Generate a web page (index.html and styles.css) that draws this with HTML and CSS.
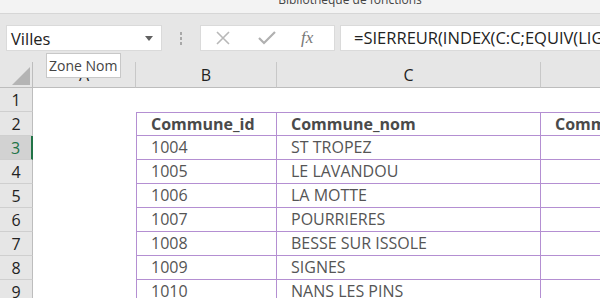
FILE: index.html
```html
<!DOCTYPE html>
<html lang="fr">
<head>
    <meta charset="UTF-8">
    <title>Classeur - Villes</title>
    <link rel="stylesheet" href="styles.css">
</head>
<body>
    <div class="titlebar"><span>Bibliothèque de fonctions</span></div>

    <div class="formulabar">
        <div class="namebox">
            <span>Villes</span>
            <svg class="caret" width="8" height="5" viewBox="0 0 8 5"><path d="M0 0h8L4 5z" fill="#606060"/></svg>
        </div>
        <div class="grip"><i></i><i></i><i></i></div>
        <div class="buttons">
            <svg width="16" height="16" viewBox="0 0 16 16"><path d="M2 2l12 12M14 2L2 14" stroke="#b8b8b8" stroke-width="1.6" fill="none"/></svg>
            <svg width="18" height="16" viewBox="0 0 18 16"><path d="M1 8l5 5L17 2" stroke="#b0b0b0" stroke-width="2.2" fill="none"/></svg>
            <span class="fx">fx</span>
        </div>
        <div class="formula">=SIERREUR(INDEX(C:C;EQUIV(LIGNE();A:A;0));"")</div>
        <div class="tooltip">Zone Nom</div>
    </div>

    <div class="sheet">
        <div class="corner"></div>
        <div class="colhead">A</div>
        <div class="colhead">B</div>
        <div class="colhead">C</div>
        <div class="colhead last"></div>

        <div class="rowhead">1</div>
        <div class="cell"></div><div class="cell"></div><div class="cell"></div><div class="cell"></div>

        <div class="rowhead">2</div>
        <div class="cell"></div>
        <div class="cell t first top bold">Commune_id</div>
        <div class="cell t top bold">Commune_nom</div>
        <div class="cell t top bold last">Commune_dep</div>

        <div class="rowhead active">3</div>
        <div class="cell"></div><div class="cell t first">1004</div><div class="cell t">ST TROPEZ</div><div class="cell t last"></div>

        <div class="rowhead">4</div>
        <div class="cell"></div><div class="cell t first">1005</div><div class="cell t">LE LAVANDOU</div><div class="cell t last"></div>

        <div class="rowhead">5</div>
        <div class="cell"></div><div class="cell t first">1006</div><div class="cell t">LA MOTTE</div><div class="cell t last"></div>

        <div class="rowhead">6</div>
        <div class="cell"></div><div class="cell t first">1007</div><div class="cell t">POURRIERES</div><div class="cell t last"></div>

        <div class="rowhead">7</div>
        <div class="cell"></div><div class="cell t first">1008</div><div class="cell t">BESSE SUR ISSOLE</div><div class="cell t last"></div>

        <div class="rowhead">8</div>
        <div class="cell"></div><div class="cell t first">1009</div><div class="cell t">SIGNES</div><div class="cell t last"></div>

        <div class="rowhead">9</div>
        <div class="cell"></div><div class="cell t first">1010</div><div class="cell t">NANS LES PINS</div><div class="cell t last"></div>
    </div>
</body>
</html>
```

FILE: styles.css
```css
body { margin: 0; width: 600px; height: 298px; overflow: hidden; background: #fff; font-family: "Open Sans", "Noto Sans", sans-serif; color: #444; }

.titlebar { height: 13px; background: #f3f3f3; border-bottom: 1px solid #d6d6d6; overflow: hidden; text-align: center; }
.titlebar span { display: block; margin-left: 100px; margin-top: -8px; font-size: 12px; line-height: 16px; color: #444; }

.formulabar { position: relative; height: 48px; background: #e6e6e6; display: flex; align-items: center; padding-left: 6px; box-sizing: border-box; }
.namebox { width: 156px; height: 26px; background: #fff; border: 1px solid #dadada; box-sizing: border-box; display: flex; align-items: center; justify-content: space-between; padding: 0 8px 0 4px; font-size: 16.5px; color: #222; }
.grip { width: 38px; display: flex; flex-direction: column; align-items: center; gap: 2px; }
.grip i { width: 2px; height: 3px; background: #a8a8a8; }
.buttons { width: 135px; height: 26px; background: #fff; border: 1px solid #dadada; box-sizing: border-box; display: flex; align-items: center; padding-left: 14px; gap: 27px; }
.fx { font-family: "Liberation Serif", serif; font-style: italic; font-size: 17px; color: #777; margin-left: -2px; }
.formula { flex: 1; min-width: 0; height: 26px; margin-left: 5px; background: #fff; border: 1px solid #dadada; border-right: none; box-sizing: border-box; padding-left: 13px; font-size: 16.5px; line-height: 24px; color: #222; white-space: nowrap; overflow: hidden; }
.tooltip { position: absolute; left: 46px; top: 39px; width: 75px; height: 25px; box-sizing: border-box; background: #fff; border: 1px solid #c8c8c8; font-size: 14px; line-height: 23px; padding-left: 2px; color: #444; z-index: 2; }

.sheet { width: 600px; overflow: hidden; display: grid; grid-template-columns: 33px 103px 141px 264px 59px; grid-template-rows: 26px repeat(9, 24px); }
.corner { background: #e6e6e6; border-right: 1px solid #bdbdbd; border-bottom: 1px solid #bdbdbd; position: relative; }
.corner::after { content: ""; position: absolute; right: 2px; bottom: 2px; border-style: solid; border-width: 0 0 18px 18px; border-color: transparent transparent #b4b4b4 transparent; }
.colhead { background: #e6e6e6; border-right: 1px solid #c8c8c8; border-bottom: 1px solid #bdbdbd; text-align: center; font-size: 16px; line-height: 26px; color: #222; }
.colhead.last { border-right: none; }
.rowhead { background: #e6e6e6; border-right: 1px solid #bdbdbd; border-bottom: 1px solid #cfcfcf; text-align: center; font-size: 16px; line-height: 24px; color: #222; }
.rowhead.active { background: #d2d2d2; color: #217346; border-right: 2px solid #217346; }

.cell { font-size: 16px; line-height: 23px; white-space: nowrap; overflow: hidden; }
.cell.t { border-right: 1px solid #b48fd2; border-bottom: 1px solid #b48fd2; padding-left: 14px; color: #555; }
.cell.t.last { border-right: none; }
.cell.first { border-left: 1px solid #b48fd2; padding-left: 14px; }
.cell.top { border-top: 1px solid #b48fd2; line-height: 22px; }
.cell.bold { font-weight: bold; color: #4a4a4a; }
```
